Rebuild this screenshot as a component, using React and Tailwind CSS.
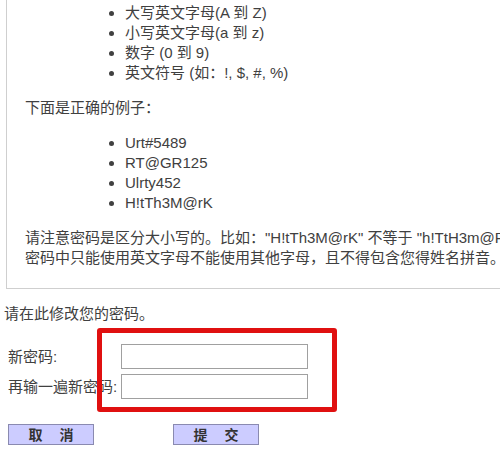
const rules = ["大写英文字母(A 到 Z)", "小写英文字母(a 到 z)", "数字 (0 到 9)", "英文符号 (如：!, $, #, %)"];
const examples = ["Urt#5489", "RT@GR125", "Ulrty452", "H!tTh3M@rK"];

const Field = ({ label }) => (
  <div className="flex items-center h-[25px]">
    <span className="w-[113px] whitespace-nowrap">{label}</span>
    <input type="password" className="w-[187px] h-[25px] border border-[#a0a0a0] bg-white outline-none" />
  </div>
);

const Btn = ({ a, b }) => (
  <button className="w-[86px] h-[21px] bg-[#ccccff] border border-[#8a8ab0] flex items-center justify-center gap-[17px] font-bold text-[14px] text-[#333]">
    <span>{a}</span>
    <span>{b}</span>
  </button>
);

export default function App() {
  return (
    <div
      className="w-[500px] h-[450px] overflow-hidden bg-white text-[#404040] text-[15px] leading-[20px]"
      style={{ fontFamily: '"Liberation Sans", "Noto Sans CJK SC", sans-serif' }}
    >
      <div className="ml-[6px] w-[560px] border-x border-b border-[#cfcfcf] pt-[3px] pb-[20px] pl-[18px] whitespace-nowrap">
        <ul className="list-disc pl-[100px]">
          {rules.map((r) => (
            <li key={r}>{r}</li>
          ))}
        </ul>
        <p className="mt-[15px]">下面是正确的例子：</p>
        <ul className="list-disc pl-[100px] mt-[15px]">
          {examples.map((r) => (
            <li key={r}>{r}</li>
          ))}
        </ul>
        <p className="mt-[15px]">请注意密码是区分大小写的。比如："H!tTh3M@rK" 不等于 "h!TtH3m@RK"。</p>
        <p>密码中只能使用英文字母不能使用其他字母，且不得包含您得姓名拼音。</p>
      </div>

      <div className="relative">
        <p className="pl-[4px] mt-[15px]">请在此修改您的密码。</p>
        <div className="pl-[8px] mt-[20px] flex flex-col gap-[5px]">
          <Field label="新密码:" />
          <Field label="再输一遍新密码:" />
        </div>
        <div className="pl-[8px] mt-[25px] flex gap-[79px]">
          <Btn a="取" b="消" />
          <Btn a="提" b="交" />
        </div>
        <div className="absolute left-[97px] top-[24px] w-[240px] h-[84px] border-[5px] border-[#e01010] rounded-[3px] pointer-events-none" />
      </div>
    </div>
  );
}
